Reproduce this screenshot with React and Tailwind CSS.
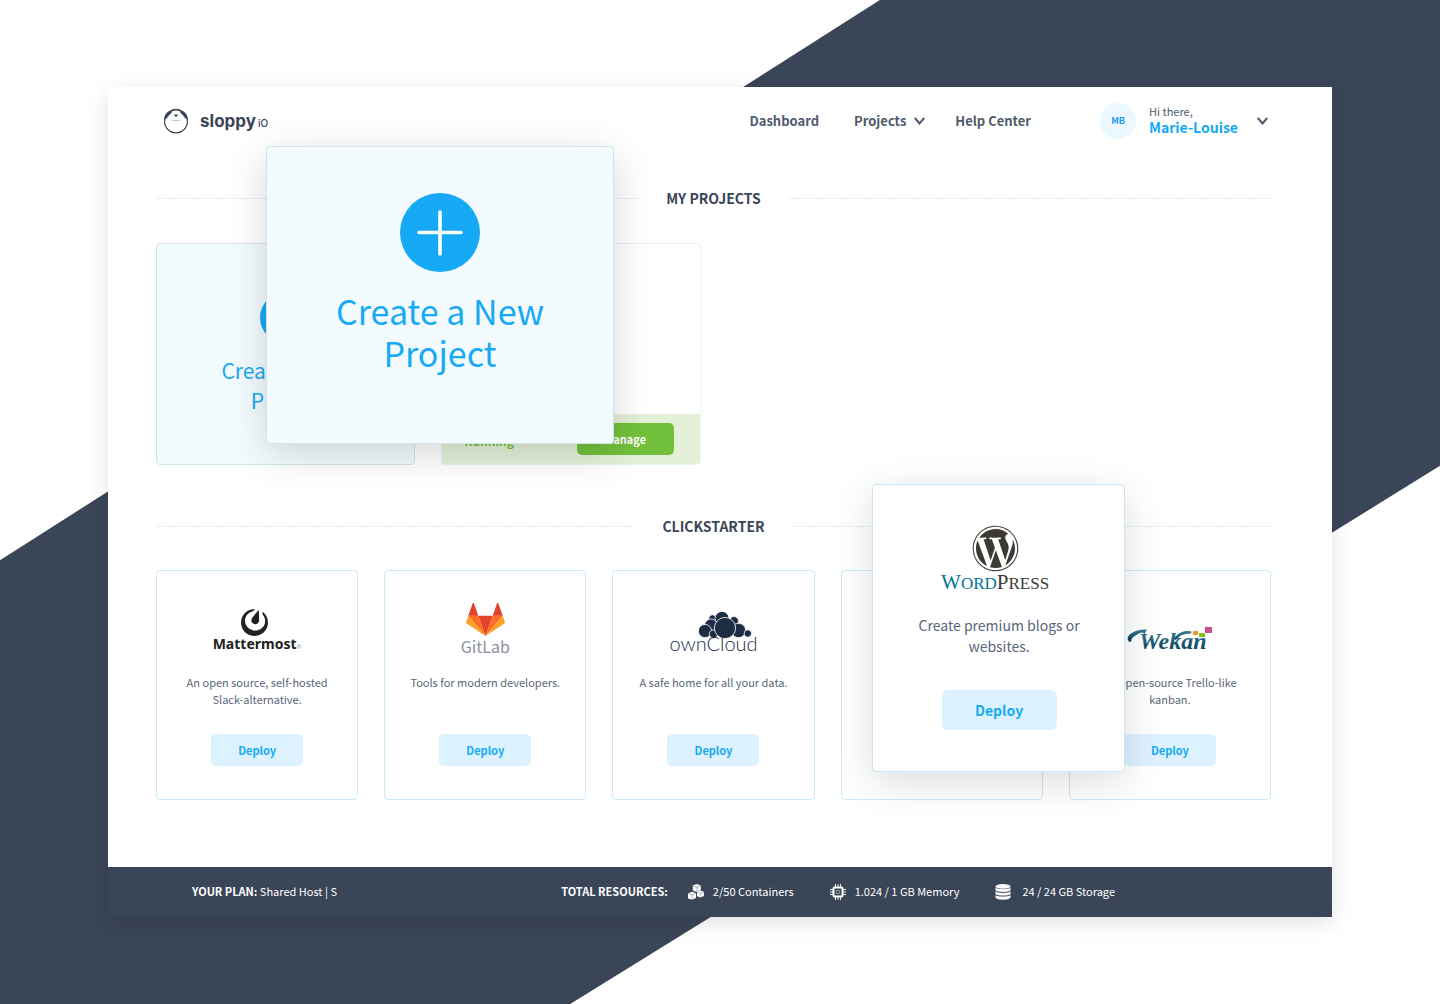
import React from "react";
import { FaWordpress } from "react-icons/fa";
import { SiMattermost } from "react-icons/si";

function SealLogo() {
  return (
    <svg viewBox="0 0 26 26" className="size-[26px]" fill="none" aria-hidden="true">
      <circle cx="13" cy="13.4" r="11.4" stroke="#3a4557" strokeWidth="1.2" />
      <path d="M1.200 12C1 6.600 4.600 2.800 8.800 2.200C9.600 4.400 8 5.200 6.800 6.400C5 8 4.400 10.400 1.200 12Z" fill="#3a4557" />
      <path d="M24.800 12C25 6.600 21.400 2.800 17.200 2.200C16.400 4.400 18 5.200 19.200 6.400C21 8 21.600 10.400 24.800 12Z" fill="#3a4557" />
      <path d="M8 2.600C11 1 15 1 18 2.600" stroke="#3a4557" strokeWidth="1.2" />
      <path d="M10.800 6.600h4.400l-2.200 2.600Z" fill="#3a4557" />
      <path d="M8 12c3 1 7 1 10 0" stroke="#a9b1bd" strokeWidth="0.800" />
    </svg>
  );
}

function Chevron({ className }) {
  return (
    <svg viewBox="0 0 11 8" className={`h-2 w-[11px] ${className || ""}`} fill="none" stroke="#4f5b6d" strokeWidth="2" aria-hidden="true">
      <path d="M.8 1L5.500 6.400L10.200 1" />
    </svg>
  );
}

function PlusCircle({ className }) {
  return (
    <svg viewBox="0 0 80 79" className={className} aria-hidden="true">
      <ellipse cx="40" cy="39.500" rx="40" ry="39.500" fill="#16aaf6" />
      <path d="M40 19v42M19 39.500h42" stroke="#fff" strokeWidth="3.600" strokeLinecap="round" />
    </svg>
  );
}

function CubesIcon() {
  const cube = "M0 1.600L4 0L8 1.400V6.200L4 8L0 6.600Z";
  const edges = "M0.500 2L4.200 3.200L7.600 1.700M4.200 3.200V7.800";
  return (
    <svg viewBox="0 0 16 16" className="size-4" aria-hidden="true">
      {["translate(4.800 0)", "translate(0 7.800)", "translate(9 6.600) scale(.86)"].map((place) => (
        <g key={place} transform={place}>
          <path d={cube} fill="#fff" />
          <path d={edges} fill="none" stroke="#3a4557" strokeWidth="0.400" />
        </g>
      ))}
    </svg>
  );
}

function ChipIcon() {
  return (
    <svg viewBox="0 0 16 16" className="size-4" fill="none" stroke="#fff" aria-hidden="true">
      <rect x="3.500" y="3.500" width="9" height="9" rx="1" strokeWidth="2" />
      <rect x="6.600" y="6.600" width="2.800" height="2.800" strokeWidth="0.800" strokeOpacity="0.500" />
      <path d="M5.500 0v3M8 0v3M10.500 0v3M5.500 13v3M8 13v3M10.500 13v3M0 5.500h3M0 8h3M0 10.500h3M13 5.500h3M13 8h3M13 10.500h3" strokeWidth="0.900" />
    </svg>
  );
}

function StorageIcon() {
  return (
    <svg viewBox="0 0 16 16" className="size-4" fill="#fff" aria-hidden="true">
      <ellipse cx="8" cy="2.400" rx="7.500" ry="2.400" />
      <path d="M.5 3.600C2 5.700 14 5.700 15.500 3.600V6.300C14 8.400 2 8.400 .5 6.300Z" />
      <path d="M.5 7.300C2 9.400 14 9.400 15.500 7.300V10C14 12.100 2 12.100 .5 10Z" />
      <path d="M.5 11C2 13.100 14 13.100 15.500 11V13.500C14 16.500 2 16.500 .5 13.500Z" />
    </svg>
  );
}

function MattermostLogo() {
  return (
    <div className="flex flex-col items-center text-[#222]">
      <SiMattermost className="mr-1.5 size-[27px]" />
      <span className="font-['Noto_Sans',sans-serif] text-sm leading-4 font-bold">
        Mattermost<span className="text-[6px] font-normal text-gray-400">®</span>
      </span>
    </div>
  );
}

function GitLabLogo() {
  return (
    <div className="flex flex-col items-center pb-px">
      <svg viewBox="0 0 256 236" className="mb-0.5 h-[33px] w-[39px]" preserveAspectRatio="none" aria-hidden="true">
        <path d="M128.075 236.075l47.104-144.970H80.970z" fill="#E24329" />
        <path d="M128.075 236.074L80.970 91.104H14.956z" fill="#FC6D26" />
        <path d="M14.956 91.104L.642 135.160a9.752 9.752 0 0 0 3.542 10.903l123.891 90.012z" fill="#FCA326" />
        <path d="M14.956 91.105H80.970L52.601 3.790c-1.460-4.493-7.816-4.492-9.275 0z" fill="#E24329" />
        <path d="M128.075 236.074l47.104-144.970h66.015z" fill="#FC6D26" />
        <path d="M241.194 91.104l14.314 44.056a9.752 9.752 0 0 1-3.543 10.903l-123.890 90.012z" fill="#FCA326" />
        <path d="M241.194 91.105h-66.015l28.370-87.315c1.460-4.493 7.816-4.492 9.275 0z" fill="#E24329" />
      </svg>
      <span className="text-base leading-4 text-[#8c929d]">GitLab</span>
    </div>
  );
}

function OwnCloudLogo() {
  return (
    <div className="flex flex-col items-center text-[#1d2d44]">
      <svg viewBox="0 0 54 28" className="ml-6 h-7 w-[54px]" fill="#1d2d44" stroke="#fff" strokeWidth="0.800" aria-hidden="true">
        <circle cx="14.500" cy="7.500" r="3.700" />
        <circle cx="36" cy="10" r="4.500" />
        <circle cx="24" cy="7.400" r="7" />
        <circle cx="13" cy="14.500" r="6.500" />
        <circle cx="7" cy="20" r="6.600" />
        <circle cx="40.500" cy="19.500" r="7.200" />
        <circle cx="49.800" cy="22.500" r="3.700" />
        <circle cx="15.500" cy="23" r="4.200" />
        <circle cx="27" cy="17" r="10.600" />
      </svg>
      <span className="-mt-1.5 pb-0.5 font-['Lato',sans-serif] text-xl leading-5 font-light">ownCloud</span>
    </div>
  );
}

function WekanLogo() {
  return (
    <svg viewBox="0 -4 86 32" className="h-8 w-[86px] overflow-visible" role="img" aria-label="Wekan">
      <defs>
        <linearGradient id="wekan" x1="0" y1="0" x2="0" y2="1">
          <stop offset="0" stopColor="#3c8099" />
          <stop offset="1" stopColor="#003a55" />
        </linearGradient>
      </defs>
      <path d="M1 13C-1 8 8 2 20 2.500C19 4 18 6 17 8C17 5 15 5 12 6.500C8 8.500 5 10 4.500 13C4 15.500 2 15.500 1 13Z" fill="url(#wekan)" />
      <path d="M47 12C51 5.500 58 3 64 4.500C65.500 6 63 7 60 6.800C55 7.500 52 9 49 13Z" fill="url(#wekan)" />
      <text x="12" y="22" fill="url(#wekan)" className="font-['Liberation_Serif',serif] text-2xl font-bold italic">Wekan</text>
      <rect x="66" y="4" width="5" height="4" fill="#f0962d" />
      <rect x="72" y="6" width="6" height="4" fill="#86bb1c" />
      <rect x="78" y="0" width="7" height="6" fill="#cb4f8c" />
    </svg>
  );
}

function WordPressLogo() {
  return (
    <div className="flex flex-col items-center pr-2">
      <FaWordpress className="size-[47px] text-[#3d3a35]" />
      <span className="font-['Liberation_Serif',serif] text-[21px] leading-5 text-[#3d3a35]">
        <span className="text-[#00749a]">W<span className="text-[17px]">ORD</span></span>P<span className="text-[17px]">RESS</span>
      </span>
    </div>
  );
}

function SectionTitle({ children }) {
  const line = "h-px flex-1 bg-[repeating-linear-gradient(90deg,#dbe9ee_0_2px,transparent_2px_3px)]";
  return (
    <div className="flex items-center gap-7">
      <span className={line} />
      <h2 className="text-sm leading-6 font-bold text-[#3a4557]">{children}</h2>
      <span className={line} />
    </div>
  );
}

function AppCard({ logo, text }) {
  return (
    <article className="flex h-[230px] flex-col items-center rounded border border-[#c9eafa] bg-white text-center">
      <div className="flex h-[84px] items-end">{logo}</div>
      <p className="mt-[19px] h-[60px] px-6 text-[11px] leading-[17px] text-[#5a6679]">{text}</p>
      <button type="button" className="h-8 w-[92px] rounded-[5px] bg-[#dcf2fe] text-[11px] font-bold text-[#16aaf6]">Deploy</button>
    </article>
  );
}

export default function App() {
  return (
    <div className="relative isolate min-h-screen bg-white px-[108px] py-[87px] font-['Noto_Sans_CJK_SC',sans-serif]">
      <div className="absolute inset-0 -z-10 bg-[#3a4557] [clip-path:polygon(61.1%_0,100%_0,100%_46.4%,39.6%_100%,0_100%,0_55.8%)]" />
      <div className="bg-white shadow-[0_6px_20px_rgba(0,0,0,0.12)]">
        <header className="flex h-[68px] items-center pr-16 pl-[55px] text-[13px] font-bold text-[#4f5b6d]">
          <a href="#home" className="flex items-center gap-[11px] text-[#3a4557]">
            <SealLogo />
            <span className="pt-0.5 font-['Inter',sans-serif] text-[17px] leading-5">
              sloppy <span className="-ml-0.5 text-[10px] font-medium">iO</span>
            </span>
          </a>
          <nav className="ml-auto flex items-center">
            <a href="#dashboard">Dashboard</a>
            <button type="button" className="ml-[35px] flex items-center gap-2 font-bold">
              Projects <Chevron />
            </button>
            <a href="#help" className="ml-[30px]">Help Center</a>
          </nav>
          <button type="button" className="ml-[69px] flex items-center text-left">
            <span className="flex size-9 items-center justify-center rounded-full bg-[#ebf8ff] text-[9px] font-bold text-[#1c9bf0]">MB</span>
            <span className="ml-[13px] flex flex-col pb-1">
              <span className="text-[11px] leading-4 font-normal">Hi there,</span>
              <span className="text-sm leading-4 font-bold text-[#16aaf6]">Marie-Louise</span>
            </span>
            <Chevron className="ml-[19px]" />
          </button>
        </header>

        <main className="pt-[31px] pr-[61px] pb-[67px] pl-12">
          <SectionTitle>MY PROJECTS</SectionTitle>
          <div className="mt-[33px] grid grid-cols-4 gap-[26px]">
            <div className="relative z-10 h-[222px]">
              <button type="button" className="flex size-full flex-col items-center rounded border border-[#cfe3ec] bg-[#f3fbff] pt-12 text-[#16aaf6]">
                <PlusCircle className="w-[52px]" />
                <span className="mt-3 w-40 text-[21px] leading-[30px]">Create a New Project</span>
              </button>
              <button type="button" className="absolute -top-[97px] left-[110px] flex h-[298px] w-[348px] flex-col items-center rounded border border-[#cfe3ec] bg-[#f3fbff] pt-[46px] text-[#16aaf6] shadow-[0_10px_40px_rgba(0,0,0,0.16)]">
                <PlusCircle className="w-20" />
                <span className="mt-[18px] w-60 text-[34px] leading-[42px]">Create a New Project</span>
              </button>
            </div>
            <article className="flex h-[222px] flex-col justify-end rounded border border-[#e4f5fc] bg-white">
              <div className="flex h-[50px] items-center justify-between rounded-b bg-[#e4f1d8] pr-[26px] pl-[22px]">
                <span className="pt-1 text-xs font-bold text-[#72be3c]">Running</span>
                <button type="button" className="h-8 w-[97px] rounded-[5px] bg-[#72c03c] text-[11px] font-bold text-white">Manage</button>
              </div>
            </article>
          </div>

          <div className="mt-[49px]">
            <SectionTitle>CLICKSTARTER</SectionTitle>
          </div>
          <div className="mt-8 grid grid-cols-5 gap-[26px]">
            <AppCard logo={<MattermostLogo />} text="An open source, self-hosted Slack-alternative." />
            <AppCard logo={<GitLabLogo />} text="Tools for modern developers." />
            <AppCard logo={<OwnCloudLogo />} text="A safe home for all your data." />
            <div className="relative z-10 h-[230px] rounded border border-[#c9eafa]">
              <article className="absolute -top-[87px] left-[30px] flex h-[288px] w-[253px] flex-col items-center rounded border border-[#c4e8f8] bg-white pt-10 pl-0.5 text-center shadow-[0_10px_40px_rgba(0,0,0,0.14)]">
                <WordPressLogo />
                <p className="mt-[21px] w-44 text-sm leading-[21px] text-[#5a6679]">Create premium blogs or websites.</p>
                <button type="button" className="mt-[33px] h-10 w-[115px] rounded-md bg-[#dcf2fe] text-sm font-bold text-[#16aaf6]">Deploy</button>
              </article>
            </div>
            <AppCard logo={<WekanLogo />} text="An open-source Trello-like kanban." />
          </div>
        </main>

        <footer className="flex h-[50px] items-center justify-between bg-[#3a4557] pr-[217px] pl-[84px] text-[11px] text-white">
          <p className="pb-0.5"><strong>YOUR PLAN:</strong> Shared Host | S</p>
          <div className="flex items-center">
            <strong className="mr-5 pb-0.5">TOTAL RESOURCES:</strong>
            <CubesIcon />
            <span className="mr-9 ml-[9px] pb-0.5">2/50 Containers</span>
            <ChipIcon />
            <span className="mr-9 ml-[9px] pb-0.5">1.024 / 1 GB Memory</span>
            <StorageIcon />
            <span className="ml-[11px] pb-0.5">24 / 24 GB Storage</span>
          </div>
        </footer>
      </div>
    </div>
  );
}
